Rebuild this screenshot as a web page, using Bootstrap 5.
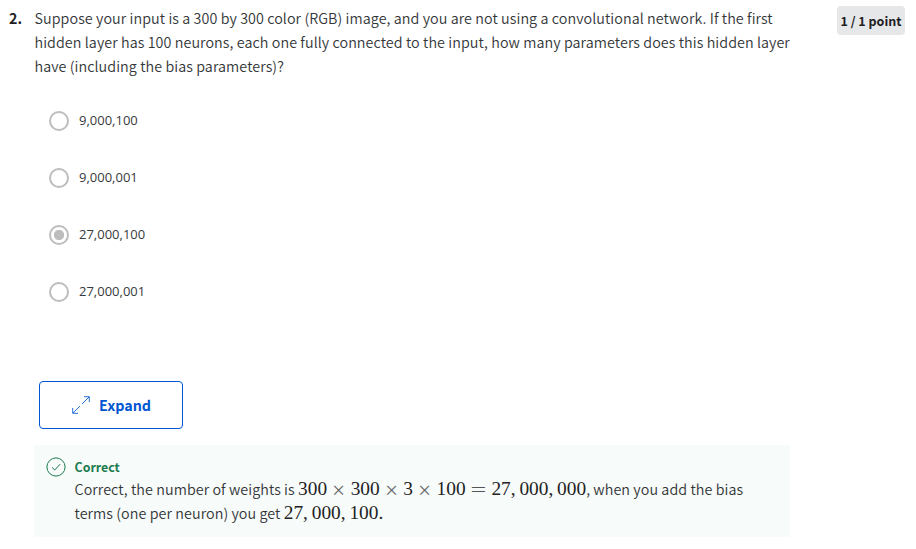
<!DOCTYPE html>
<html lang="en">
<head>
<meta charset="utf-8">
<meta name="viewport" content="width=device-width, initial-scale=1">
<title>Quiz question</title>
<link href="https://cdn.jsdelivr.net/npm/bootstrap@5.3.0/dist/css/bootstrap.min.css" rel="stylesheet">
<style>
body{font-family:"Noto Sans CJK JP","Noto Sans CJK SC","Open Sans",sans-serif;font-size:14.32px;line-height:24px;color:#1f1f1f;background:#fff;overflow:hidden}
.quiz{padding:6px 11px 0 9px}
.q-number{width:25px;font-weight:700}
.q-body{width:756px}
.prompt{color:#333638;font-weight:350;letter-spacing:.073px}
.q-body>.prompt{padding-left:.5px}
.points{background:#e5e7e8;border-radius:4px;width:68px;height:29px;font-size:12.5px;font-weight:700;line-height:29px}
.options{padding:33px 0 0 15px}
.option{height:57px;gap:10px}
.option-text{font:13px/20px "Open Sans",sans-serif;color:#373a3c;margin-top:-1px}
.option .form-check-input{width:20px;height:20px;border:2px solid #bdbdbd;background:#fff;box-shadow:none}
.option .form-check-input:checked{background:radial-gradient(circle,#bdbdbd 4.8px,#fff 5.5px);border-color:#bdbdbd}
.expand-btn{width:144px;height:48px;margin:42px 0 0 5px;border:1px solid #0056d2;border-radius:4px;color:#0056d2;font-size:14.3px;font-weight:700;gap:9px;padding-left:1px!important}
.expand-btn svg{stroke-opacity:.85}
.feedback{height:92px;margin-top:16px;padding:12px 0 0 12px;background:#f7fbfa;gap:8.5px}
.feedback-title{color:#1d7c50;font-size:12.4px;font-weight:700;line-height:23px;height:21px;margin-top:-1px}
.math{font-family:"Liberation Serif",serif;font-size:19.36px;line-height:1;letter-spacing:0;color:#222}
.op{display:inline-block;width:15px;margin:0 4.3px;text-align:center;transform:translateY(2px) scale(1.2);color:#666}
.eq{display:inline-block;width:15px;margin:0 5.4px;text-align:center;transform:translateY(1px) scaleX(1.45);color:#555}
.sep{letter-spacing:3.8px}
.line{display:block;white-space:nowrap}
</style>
<script src="https://cdn.jsdelivr.net/npm/bootstrap@5.3.0/dist/js/bootstrap.bundle.min.js"></script>
</head>
<body>
<main class="quiz d-flex align-items-start">
  <div class="q-number flex-shrink-0">2.</div>
  <section class="q-body flex-shrink-0">
    <div class="prompt">
      <span class="line">Suppose your input is a 300 by 300 color (RGB) image, and you are not using a convolutional network. If the first</span>
      <span class="line">hidden layer has 100 neurons, each one fully connected to the input, how many parameters does this hidden layer</span>
      <span class="line">have (including the bias parameters)?</span>
    </div>
    <div class="options">
      <label class="option d-flex"><input class="form-check-input m-0 flex-shrink-0" type="radio" name="answer"><span class="option-text">9,000,100</span></label>
      <label class="option d-flex"><input class="form-check-input m-0 flex-shrink-0" type="radio" name="answer"><span class="option-text">9,000,001</span></label>
      <label class="option d-flex"><input class="form-check-input m-0 flex-shrink-0" type="radio" name="answer" checked><span class="option-text">27,000,100</span></label>
      <label class="option d-flex"><input class="form-check-input m-0 flex-shrink-0" type="radio" name="answer"><span class="option-text">27,000,001</span></label>
    </div>
    <button type="button" class="btn expand-btn d-flex align-items-center justify-content-center p-0">
      <svg width="18" height="18" viewBox="0 0 18 18" fill="none" stroke="currentColor" aria-hidden="true"><path d="M10 8L17 1M12 .7H17.3V6M8 10L1 17M.7 12V17.3H6"/></svg>
      <span>Expand</span>
    </button>
    <div class="feedback d-flex">
      <svg class="flex-shrink-0" width="20" height="20" viewBox="0 0 20 20" fill="none" stroke="#1d7c50" aria-hidden="true"><circle cx="10" cy="10" r="9.1"/><path d="M6 10.3L8.8 13L14 7.2"/></svg>
      <div>
        <div class="feedback-title">Correct</div>
        <div class="prompt">
          <span class="line">Correct, the number of weights is <span class="math">300<span class="op">×</span>300<span class="op">×</span>3<span class="op">×</span>100<span class="eq">=</span>27<span class="sep">,</span>000<span class="sep">,</span>000</span>, when you add the bias</span>
          <span class="line">terms (one per neuron) you get <span class="math">27<span class="sep">,</span>000<span class="sep">,</span>100.</span></span>
        </div>
      </div>
    </div>
  </section>
  <div class="points ms-auto flex-shrink-0 text-center">1 / 1 point</div>
</main>
</body>
</html>
